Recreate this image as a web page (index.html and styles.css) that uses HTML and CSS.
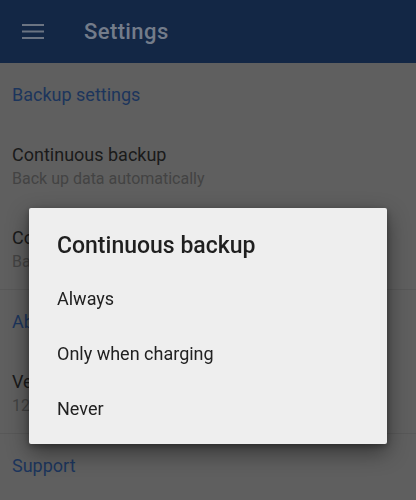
FILE: index.html
```html
<!DOCTYPE html>
<html>
<head>
<meta charset="utf-8">
<link rel="stylesheet" href="styles.css">
</head>
<body>
<div class="app">
  <header class="toolbar">
    <svg class="menu" width="22" height="16" viewBox="0 0 22 16">
      <rect x="0" y="1" width="22" height="2" fill="#6b7482"/>
      <rect x="0" y="7.5" width="22" height="2" fill="#6b7482"/>
      <rect x="0" y="14" width="22" height="2" fill="#6b7482"/>
    </svg>
    <div class="title">Settings</div>
  </header>
  <main class="list">
    <section class="group">
      <div class="category">Backup settings</div>
      <div class="item">
        <div class="item-title">Continuous backup</div>
        <div class="item-sub">Back up data automatically</div>
      </div>
      <div class="item">
        <div class="item-title">Connection type</div>
        <div class="item-sub">Back up over Wi-Fi only</div>
      </div>
    </section>
    <section class="group">
      <div class="category">About</div>
      <div class="item">
        <div class="item-title">Version</div>
        <div class="item-sub">12.4.0</div>
      </div>
    </section>
    <section class="group last">
      <div class="category">Support</div>
    </section>
  </main>
  <div class="dialog">
    <div class="dialog-title">Continuous backup</div>
    <div class="option">Always</div>
    <div class="option">Only when charging</div>
    <div class="option">Never</div>
  </div>
</div>
</body>
</html>
```
FILE: styles.css
```css
html, body {
  margin: 0;
  padding: 0;
}
body {
  width: 416px;
  height: 500px;
  overflow: hidden;
  background: #5f5f5f;
  font-family: Roboto, "Noto Sans", sans-serif;
}
.app {
  display: flex;
  flex-direction: column;
  height: 500px;
}
.toolbar {
  height: 63px;
  background: #132745;
  display: flex;
  align-items: center;
  padding-left: 22px;
  gap: 40px;
  flex-shrink: 0;
}
.menu {
  display: block;
  margin-top: -1px;
}
.title {
  color: #737c8a;
  font-size: 22px;
  letter-spacing: 0.4px;
  font-weight: 500;
  margin-top: -1px;
}
.list {
  display: flex;
  flex-direction: column;
}
.group {
  border-bottom: 1px solid #585858;
}
.group.last {
  border-bottom: none;
}
.category {
  height: 60px;
  box-sizing: border-box;
  padding: 20px 12px 0;
  font-size: 18px;
  line-height: 24px;
  color: #1c355c;
}
.item {
  height: 83px;
  box-sizing: border-box;
  padding: 20px 12px 0;
}
.item-title {
  font-size: 18px;
  line-height: 24px;
  color: #1a1a1a;
}
.item-sub {
  font-size: 16px;
  line-height: 23px;
  color: #434343;
}
.dialog {
  position: fixed;
  left: 29px;
  top: 208px;
  width: 358px;
  height: 236px;
  box-sizing: border-box;
  background: #eeeeee;
  border-radius: 2px;
  box-shadow: 0 8px 22px rgba(0, 0, 0, 0.45), 0 2px 6px rgba(0, 0, 0, 0.3);
  padding: 24px 28px 8px;
  display: flex;
  flex-direction: column;
}
.dialog-title {
  font-size: 23px;
  line-height: 28px;
  font-weight: 500;
  color: #1f1f1f;
  margin-bottom: 11px;
}
.option {
  height: 55px;
  line-height: 55px;
  font-size: 18px;
  color: #212121;
}
```
